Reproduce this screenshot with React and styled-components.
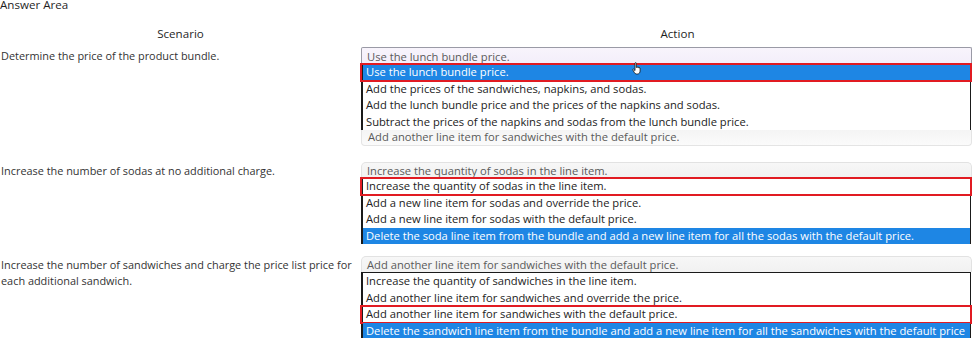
import React from 'react'
import styled, {createGlobalStyle} from 'styled-components'

const GlobalStyle = createGlobalStyle`
  html, body {
    margin: 0;
    padding: 0;
    background: #ffffff;
  }
  body {
    font-family: "Open Sans", "Noto Sans", sans-serif;
    font-size: 11.2px;
    color: #2b2b2b;
  }
`

const questions = [
  {
    scenario: 'Determine the price of the product bundle.',
    value: 'Use the lunch bundle price.',
    tone: 'lavender',
    listBorder: 'sides',
    options: [
      {text: 'Use the lunch bundle price.', selected: true, marked: true, cursor: true},
      {text: 'Add the prices of the sandwiches, napkins, and sodas.'},
      {text: 'Add the lunch bundle price and the prices of the napkins and sodas.'},
      {text: 'Subtract the prices of the napkins and sodas from the lunch bundle price.'},
    ],
    footer: 'Add another line item for sandwiches with the default price.',
    gap: 16,
  },
  {
    scenario: 'Increase the number of sodas at no additional charge.',
    value: 'Increase the quantity of sodas in the line item.',
    tone: 'grey',
    listBorder: 'sides',
    options: [
      {text: 'Increase the quantity of sodas in the line item.', marked: true},
      {text: 'Add a new line item for sodas and override the price.'},
      {text: 'Add a new line item for sodas with the default price.'},
      {text: 'Delete the soda line item from the bundle and add a new line item for all the sodas with the default price.', selected: true},
    ],
    gap: 12,
  },
  {
    scenario: 'Increase the number of sandwiches and charge the price list price for each additional sandwich.',
    value: 'Add another line item for sandwiches with the default price.',
    tone: 'grey',
    listBorder: 'full',
    options: [
      {text: 'Increase the quantity of sandwiches in the line item.'},
      {text: 'Add another line item for sandwiches and override the price.'},
      {text: 'Add another line item for sandwiches with the default price.', marked: true},
      {text: 'Delete the sandwich line item from the bundle and add a new line item for all the sandwiches with the default price', selected: true},
    ],
    gap: 0,
  },
]

const HandCursor = () => (
  <CursorIcon width="10" height="13" viewBox="0 0 10 13">
    <path
      d="M3 1.2c0-.7 1.3-.7 1.3 0V5.5l.3-.1c0-.6 1.2-.6 1.2 0v.3c0-.6 1.2-.6 1.2 0v.4c0-.5 1.1-.5 1.1.1V9c0 1.6-1 3-2.6 3H4.4C3.4 12 2.9 11.4 2.4 10.6L.8 7.9c-.4-.6.4-1.2.9-.6L3 8.6Z"
      fill="#ffffff"
      stroke="#111111"
      strokeWidth="0.8"
      strokeLinejoin="round"
    />
  </CursorIcon>
)

const App = () => {
  return (
    <>
      <GlobalStyle/>
      <Page>
        <Title>Answer Area</Title>
        <Grid>
          <HeadCell>Scenario</HeadCell>
          <HeadCell $shift={11}>Action</HeadCell>
          {questions.map((q, i) => (
            <React.Fragment key={i}>
              <Scenario $gap={q.gap}>{q.scenario}</Scenario>
              <Dropdown $gap={q.gap}>
                <SelectBox $tone={q.tone}>{q.value}</SelectBox>
                <OptionList $border={q.listBorder}>
                  {q.options.map((o, j) => (
                    <Option key={j} $selected={o.selected} $marked={o.marked}>
                      {o.text}
                      {o.cursor && <HandCursor/>}
                    </Option>
                  ))}
                </OptionList>
                {q.footer && <Footer>{q.footer}</Footer>}
              </Dropdown>
            </React.Fragment>
          ))}
        </Grid>
      </Page>
    </>
  )
}

export default App

const Page = styled.div`
  width: 973px;
  height: 338px;
  overflow: hidden;
  box-sizing: border-box;
`

const Title = styled.div`
  height: 13px;
  line-height: 10px;
  color: #1f1f1f;
  font-size: 11.6px;
`

const Grid = styled.div`
  display: grid;
  grid-template-columns: 361px 611px;
  padding-top: 13px;
`

const HeadCell = styled.div`
  text-align: center;
  color: #1f1f1f;
  font-size: 11.6px;
  height: 21px;
  line-height: 16px;
  padding-left: ${p => (p.$shift || 0) * 2}px;
`

const Scenario = styled.div`
  padding: 1px 0 0 1px;
  line-height: 16px;
  font-size: 10.9px;
  color: #333333;
  margin-bottom: ${p => p.$gap}px;
`

const Dropdown = styled.div`
  display: flex;
  flex-direction: column;
  margin-bottom: ${p => p.$gap}px;
`

const SelectBox = styled.div`
  height: ${p => (p.$tone === 'lavender' ? 16 : 15)}px;
  line-height: ${p => (p.$tone === 'lavender' ? 17 : 16)}px;
  padding-left: 5px;
  color: #5a5a5a;
  border: 1px solid ${p => (p.$tone === 'lavender' ? '#9a9aa6' : '#e2e2e2')};
  border-bottom: none;
  border-radius: ${p => (p.$tone === 'lavender' ? '2px 2px 0 0' : '5px 5px 0 0')};
  background: ${p => (p.$tone === 'lavender'
    ? 'linear-gradient(#f8f4fc, #f3eefa)'
    : 'linear-gradient(#f7f7f7, #f1f1f1)')};
  white-space: nowrap;
  overflow: hidden;
`

const OptionList = styled.div`
  background: #ffffff;
  border-left: 2px solid #1a1a1a;
  border-right: 1px solid #1a1a1a;
  border-top: ${p => (p.$border === 'full' ? '1px solid #1a1a1a' : 'none')};
  margin-right: 1px;
`

const Option = styled.div`
  position: relative;
  height: 16.5px;
  line-height: 16.5px;
  padding-left: 3px;
  white-space: nowrap;
  overflow: hidden;
  color: ${p => (p.$selected ? '#ffffff' : '#222222')};
  background: ${p => (p.$selected ? '#1e86e4' : 'transparent')};

  ${p => p.$marked && `
    overflow: visible;
    &::after {
      content: '';
      position: absolute;
      left: -3px;
      right: -2px;
      top: -1px;
      bottom: -1px;
      border: 2px solid #e11b22;
      pointer-events: none;
    }
  `}
`

const CursorIcon = styled.svg`
  position: absolute;
  left: 269px;
  top: -2px;
  z-index: 2;
`

const Footer = styled.div`
  height: 15px;
  line-height: 14px;
  padding-left: 6px;
  color: #5a5a5a;
  border: 1px solid #e4e4e4;
  border-top: none;
  border-radius: 0 0 4px 4px;
  background: linear-gradient(#f4f4f4, #fbfbfb);
  white-space: nowrap;
`
